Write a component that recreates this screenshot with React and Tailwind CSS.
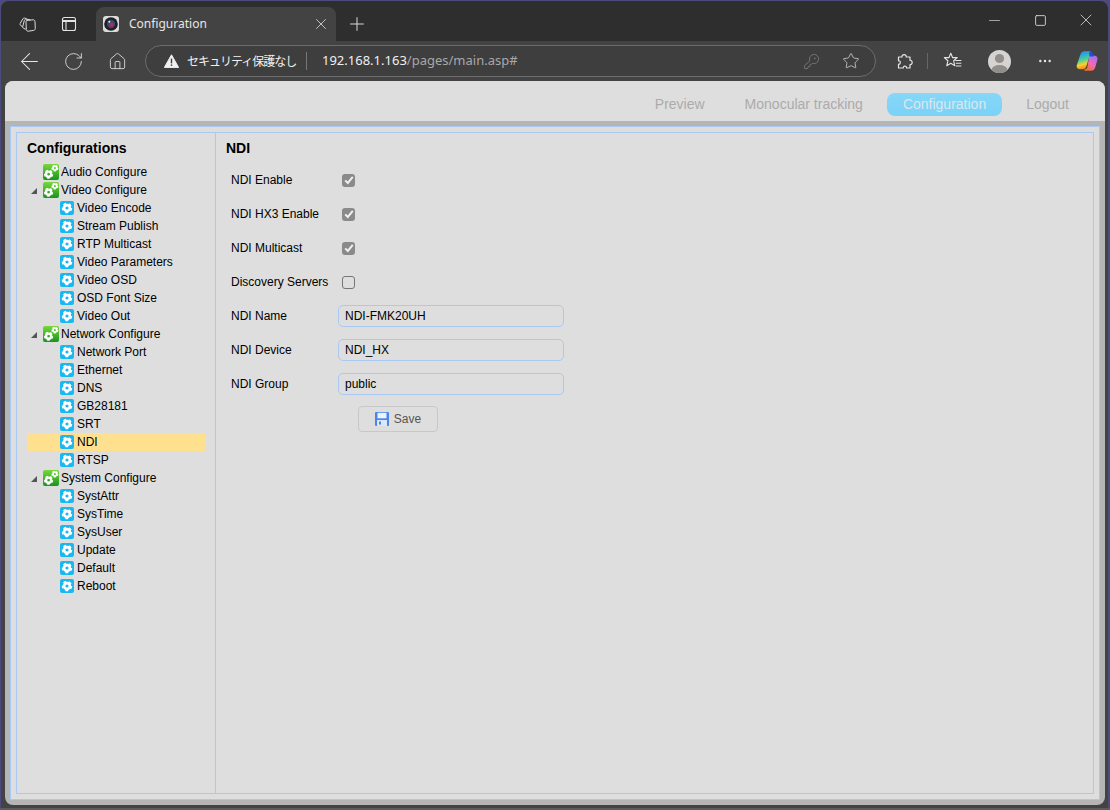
import { ArrowLeft, RotateCw, Home, KeyRound, Star, X, Plus, Minus, Square, MoreHorizontal } from 'lucide-react'

const TREE = [
  { name: 'Audio Configure', group: true },
  { name: 'Video Configure', group: true, open: true },
  { name: 'Video Encode' },
  { name: 'Stream Publish' },
  { name: 'RTP Multicast' },
  { name: 'Video Parameters' },
  { name: 'Video OSD' },
  { name: 'OSD Font Size' },
  { name: 'Video Out' },
  { name: 'Network Configure', group: true, open: true },
  { name: 'Network Port' },
  { name: 'Ethernet' },
  { name: 'DNS' },
  { name: 'GB28181' },
  { name: 'SRT' },
  { name: 'NDI', active: true },
  { name: 'RTSP' },
  { name: 'System Configure', group: true, open: true },
  { name: 'SystAttr' },
  { name: 'SysTime' },
  { name: 'SysUser' },
  { name: 'Update' },
  { name: 'Default' },
  { name: 'Reboot' },
]

const CHECKS = [
  { label: 'NDI Enable', checked: true },
  { label: 'NDI HX3 Enable', checked: true },
  { label: 'NDI Multicast', checked: true },
  { label: 'Discovery Servers', checked: false },
]

const FIELDS = [
  { label: 'NDI Name', value: 'NDI-FMK20UH' },
  { label: 'NDI Device', value: 'NDI_HX' },
  { label: 'NDI Group', value: 'public' },
]

function Gear({ cx, cy, r }) {
  return (
    <g fill="none" stroke="#fff">
      <circle cx={cx} cy={cy} r={r * 0.6} strokeWidth={r * 0.55} />
      <circle cx={cx} cy={cy} r={r * 0.92} strokeWidth={r * 0.34} strokeDasharray={`${r * 0.6} ${r * 0.55}`} />
    </g>
  )
}

function GroupIcon() {
  return (
    <svg width="16" height="16" viewBox="0 0 16 16" className="shrink-0">
      <defs>
        <linearGradient id="grp" x1="0" y1="0" x2="0" y2="1">
          <stop offset="0" stopColor="#78d83c" />
          <stop offset="1" stopColor="#1a941c" />
        </linearGradient>
      </defs>
      <rect width="16" height="16" rx="2" fill="url(#grp)" />
      <Gear cx={5.6} cy={10.2} r={4.2} />
      <Gear cx={11.9} cy={4.1} r={3.2} />
    </svg>
  )
}

function LeafIcon() {
  return (
    <svg width="14" height="14" viewBox="0 0 14 14" className="shrink-0">
      <rect width="14" height="14" rx="2" fill="#1ab8f0" />
      <Gear cx={7} cy={7} r={4.8} />
    </svg>
  )
}

function TreeRow({ item }) {
  if (item.group) {
    return (
      <div className="flex h-[18px] items-center">
        <span className="flex w-[16px] shrink-0 justify-center pr-[2px] pt-[2px]">
          {item.open && (
            <svg width="6" height="6" viewBox="0 0 6 6">
              <polygon points="6,0 6,6 0,6" fill="#555" />
            </svg>
          )}
        </span>
        <GroupIcon />
        <span className="ml-[2px] whitespace-nowrap">{item.name}</span>
      </div>
    )
  }
  return (
    <div className={`flex h-[18px] items-center pl-[33px] ${item.active ? 'bg-[#ffe08e]' : ''}`}>
      <LeafIcon />
      <span className="ml-[3px] whitespace-nowrap">{item.name}</span>
    </div>
  )
}

function Check({ checked }) {
  if (!checked) {
    return <span className="ml-[4px] block h-[13px] w-[13px] rounded-[3px] border border-[#767676]" />
  }
  return (
    <span className="ml-[4px] flex h-[13px] w-[13px] items-center justify-center rounded-[3px] bg-[#8a8a8a]">
      <svg width="10" height="10" viewBox="0 0 10 10">
        <path d="M1.2 5.4 3.800 8 8.800 1.800" fill="none" stroke="#efefef" strokeWidth="2" />
      </svg>
    </span>
  )
}

function SaveIcon() {
  return (
    <svg width="14" height="14" viewBox="0 0 14 14">
      <rect width="14" height="14" rx="1" fill="#4a86e8" />
      <rect x="2.500" y="0.800" width="9" height="5.500" fill="#eaf3fe" />
      <rect x="2" y="8" width="10" height="6" fill="#dbe8fa" />
      <rect x="4" y="9.500" width="2" height="3" fill="#4a86e8" />
    </svg>
  )
}

function NavItem({ children, active }) {
  return (
    <span className={`flex h-[23px] items-center rounded-[8px] px-4 ${active ? 'bg-linear-to-b from-[#86d7f8] to-[#7bd2f7] text-[#dbe7ee]' : 'text-[#ababab]'}`}>
      {children}
    </span>
  )
}

function TabsIcon() {
  return (
    <svg width="18" height="18" viewBox="0 0 18 18" fill="none" stroke="#dcdcdc" strokeWidth="1" strokeLinejoin="round">
      <path d="M8.500 5.500 15 4.800c1.100-.1 1.900.6 2 1.700l.3 7c0 1-.7 1.800-1.700 1.900l-5.400.800c-1 .1-1.800-.6-1.900-1.700L8 7c0-.9 0-1.400.5-1.500Z" />
      <path d="M7.800 14.200 5.800 13.500c-.9-.4-1.300-1.200-1-2.200L6.300 5.500c.3-1 1.200-1.500 2.200-1.300l4 .7" />
      <path d="M4.600 11.800 2.800 10.600c-.8-.6-1-1.500-.5-2.300l2.500-4.400c.5-.8 1.500-1.100 2.300-.7l2 1" />
    </svg>
  )
}

function VerticalTabsIcon() {
  return (
    <svg width="16" height="16" viewBox="0 0 16 16" fill="none" stroke="#e4e4e4" strokeWidth="1.100">
      <rect x="1.500" y="1.500" width="13" height="13" rx="2" />
      <path d="M1.500 5h13" strokeWidth="2" />
      <path d="M5 5v9.500" />
    </svg>
  )
}

function Favicon() {
  return (
    <svg width="16" height="16" viewBox="0 0 16 16">
      <rect width="16" height="16" rx="3" fill="#dcdcdc" />
      <circle cx="8" cy="8" r="6.800" fill="#1f1f24" />
      <circle cx="8" cy="8" r="4.200" fill="#2f4a7c" />
      <circle cx="8.600" cy="8.600" r="2.200" fill="#c02a36" />
      <circle cx="6.300" cy="5.800" r="1" fill="#eef0f6" />
    </svg>
  )
}

function WarnIcon() {
  return (
    <svg width="15" height="14" viewBox="0 0 15 14">
      <path d="M7.500.8 14.600 13.400H.4Z" fill="#f0f0f0" stroke="#f0f0f0" strokeLinejoin="round" />
      <rect x="6.800" y="4.600" width="1.400" height="4.800" fill="#3c3c3c" />
      <rect x="6.800" y="10.400" width="1.400" height="1.500" fill="#3c3c3c" />
    </svg>
  )
}

function ExtensionsIcon() {
  return (
    <svg width="18" height="18" viewBox="0 0 18 18" fill="none" stroke="#e4e4e4" strokeWidth="1.200" strokeLinejoin="round">
      <path d="M2.500 5H6c-.5-3.200 4.700-3.200 4.200 0H14v3.300c2.900-.5 2.900 4.700 0 4.200V16h-3.500c.5-2.400-3.700-2.400-3.200 0H2.500v-3.800c2.400.5 2.400-3.900 0-3.400Z" />
    </svg>
  )
}

function FavoritesIcon() {
  return (
    <svg width="20" height="20" viewBox="0 0 18 18" fill="none" stroke="#e4e4e4" strokeWidth="1" strokeLinejoin="round">
      <path d="M7 2 8.700 6h4.100l-3.200 2.800 1 4.400L7 11l-3.600 2.200 1-4.400L1.200 6h4.100Z" />
      <path d="M11 8.500h5.500M11.500 11h5M11.500 13.500h5" />
    </svg>
  )
}

function ProfileIcon() {
  return (
    <svg width="23" height="23" viewBox="0 0 23 23">
      <defs>
        <clipPath id="prof">
          <circle cx="11.500" cy="11.500" r="11.500" />
        </clipPath>
      </defs>
      <circle cx="11.500" cy="11.500" r="11.500" fill="#d6d3d0" />
      <g clipPath="url(#prof)" fill="#918e8b">
        <circle cx="11.500" cy="8.500" r="4.600" />
        <ellipse cx="11.500" cy="20" rx="8" ry="5" />
      </g>
    </svg>
  )
}

function CopilotIcon() {
  return (
    <svg width="24" height="24" viewBox="0 0 24 24">
      <defs>
        <linearGradient id="cpa" x1="0.300" y1="0" x2="0.500" y2="1">
          <stop offset="0" stopColor="#2f8cf0" />
          <stop offset="0.45" stopColor="#3fd0a0" />
          <stop offset="0.75" stopColor="#f4d32f" />
          <stop offset="1" stopColor="#f08a24" />
        </linearGradient>
        <linearGradient id="cpb" x1="0.800" y1="0" x2="0.200" y2="1">
          <stop offset="0" stopColor="#a86ff0" />
          <stop offset="0.500" stopColor="#f06bb8" />
          <stop offset="1" stopColor="#f0702e" />
        </linearGradient>
      </defs>
      <path d="M9 3h6L10.500 17.500c-.5 1.500-1.500 2-3 2H5C3 19.500 2 18 2.500 16.500L6 6c.6-2 1.500-3 3-3Z" fill="url(#cpa)" stroke="url(#cpa)" strokeWidth="1.500" strokeLinejoin="round" />
      <path d="M15 7.500h4.500c1.800 0 2.600 1.300 2.200 3l-2.200 7.500c-.6 2-1.800 3-3.500 3H10c1.500 0 2.500-1 3-2.500L15 7.500Z" fill="url(#cpb)" stroke="url(#cpb)" strokeWidth="1.500" strokeLinejoin="round" />
      <path d="M15 2.500c1.800.1 2.900 1.200 3.200 3l.4 2H15l-1-3Z" fill="#1f4fd8" />
    </svg>
  )
}

function Slot({ className, children }) {
  return <div className={`flex h-full shrink-0 items-center justify-center ${className}`}>{children}</div>
}

export default function App() {
  return (
    <div className="flex h-[810px] w-[1110px] flex-col overflow-hidden bg-[#4c4a7e] font-['Liberation_Sans',Arial,sans-serif] text-[12px] text-black">
      <div className="ml-[1px] mr-[2px] mt-[1px] flex flex-1 flex-col overflow-hidden rounded-t-[8px] bg-[#434343]">
        {/* tab strip */}
        <div className="flex h-[40px] shrink-0 items-end bg-[#2e2e2e] pl-[5px]">
          <div className="flex h-[34px] w-[90px] shrink-0 pb-[1px]">
            <Slot className="w-[42px]"><TabsIcon /></Slot>
            <Slot className="w-[42px]"><VerticalTabsIcon /></Slot>
          </div>
          <div className="flex h-[34px] w-[240px] shrink-0 items-center rounded-t-[8px] bg-[#434343] pl-[7px] pr-[6px] font-['Noto_Sans',sans-serif] text-[#e6e6e6]">
            <Favicon />
            <span className="ml-[10px] flex-1">Configuration</span>
            <X size={18} strokeWidth={1.1} color="#dcdcdc" />
          </div>
          <div className="flex h-[34px] w-[42px] shrink-0 items-center justify-center">
            <Plus size={22} strokeWidth={1} color="#e8e8e8" />
          </div>
          <div className="-mr-[1px] flex h-[40px] flex-1 justify-end pb-[2px]">
            <Slot className="w-[46px]"><Minus size={17} strokeWidth={0.9} color="#e8e8e8" /></Slot>
            <Slot className="w-[46px]"><Square size={13} strokeWidth={1.5} color="#e8e8e8" /></Slot>
            <Slot className="w-[46px]"><X size={20} strokeWidth={0.9} color="#e8e8e8" /></Slot>
          </div>
        </div>

        {/* address bar */}
        <div className="flex h-[40px] shrink-0 items-center pl-[6px]">
          <Slot className="w-[44px]"><ArrowLeft size={27} strokeWidth={0.9} color="#e8e8e8" /></Slot>
          <Slot className="w-[44px]"><RotateCw size={21} strokeWidth={1} color="#e0e0e0" /></Slot>
          <Slot className="w-[44px]"><Home size={19} strokeWidth={1.1} color="#e0e0e0" /></Slot>
          <div className="ml-[6px] flex h-[32px] w-[731px] shrink-0 items-center rounded-full border border-[#6c6c6c] bg-[#3e3e3e] pl-[18px] font-['Noto_Sans',sans-serif] text-[13px]">
            <WarnIcon />
            <span className="ml-[8px] w-[110px] whitespace-nowrap font-['Noto_Sans_CJK_JP',sans-serif] text-[12px] tracking-[-1px] text-[#f0f0f0]">セキュリティ保護なし</span>
            <span className="ml-[9px] h-[18px] w-px bg-[#777]" />
            <span className="ml-[15px] text-[#f0f0f0]">192.168.1.163</span>
            <span className="flex-1 text-[#a8a8a8]">/pages/main.asp#</span>
            <Slot className="w-[40px]"><KeyRound size={17} strokeWidth={1} color="#8c8c8c" /></Slot>
            <Slot className="mr-[4px] w-[40px]"><Star size={18} strokeWidth={1.1} color="#d0d0d0" /></Slot>
          </div>
          <Slot className="ml-[7px] w-[44px]"><ExtensionsIcon /></Slot>
          <span className="h-[16px] w-px shrink-0 bg-[#666]" />
          <Slot className="ml-[2px] w-[46px]"><FavoritesIcon /></Slot>
          <Slot className="w-[46px]"><ProfileIcon /></Slot>
          <Slot className="w-[46px]"><MoreHorizontal size={16} strokeWidth={1.6} color="#e8e8e8" /></Slot>
          <Slot className="w-[38px]"><CopilotIcon /></Slot>
        </div>

        {/* device page */}
        <div className="mb-[3px] ml-[4px] mr-[3px] flex flex-1 flex-col overflow-hidden rounded-[8px] bg-[#b5b5b5]">
          <div className="flex h-[40px] shrink-0 items-center justify-end gap-2 bg-[#dedede] pr-5 pt-[7px] text-[14px]">
            <NavItem>Preview</NavItem>
            <NavItem>Monocular tracking</NavItem>
            <NavItem active>Configuration</NavItem>
            <NavItem>Logout</NavItem>
          </div>
          <div className="flex flex-1 flex-col px-[5px] py-[5px]">
            <div className="flex flex-1 flex-col border border-[#a9c9f2] bg-[#dedede] p-[5px]">
              <div className="flex flex-1 border border-[#a9c9f2]">
                <aside className="w-[199px] shrink-0 border-r border-[#a9c9f2] pl-[10px] pr-[9px]">
                  <div className="flex h-[30px] items-center text-[14px] font-bold">Configurations</div>
                  {TREE.map((item) => (
                    <TreeRow key={item.name} item={item} />
                  ))}
                </aside>
                <main className="flex-1 pl-[10px]">
                  <div className="flex h-[30px] items-center text-[14px] font-bold">NDI</div>
                  <div className="pl-[5px]">
                    {CHECKS.map((c) => (
                      <div key={c.label} className="flex h-[34px] items-center">
                        <span className="w-[107px] shrink-0 whitespace-nowrap">{c.label}</span>
                        <Check checked={c.checked} />
                      </div>
                    ))}
                    {FIELDS.map((f) => (
                      <div key={f.label} className="flex h-[34px] items-center">
                        <span className="w-[107px] shrink-0">{f.label}</span>
                        <input
                          readOnly
                          value={f.value}
                          className="h-[22px] w-[226px] rounded-[5px] border border-[#a9c9f2] bg-transparent px-[6px] text-[12px] outline-none"
                        />
                      </div>
                    ))}
                    <button className="ml-[127px] mt-[5px] flex h-[26px] w-[80px] items-center justify-center gap-[5px] rounded-[4px] border border-[#c8c8c8] text-[#555]">
                      <SaveIcon />
                      <span>Save</span>
                    </button>
                  </div>
                </main>
              </div>
            </div>
          </div>
        </div>
      </div>
      <div className="h-[2px] shrink-0 bg-[#5c5c5c]" />
    </div>
  )
}
